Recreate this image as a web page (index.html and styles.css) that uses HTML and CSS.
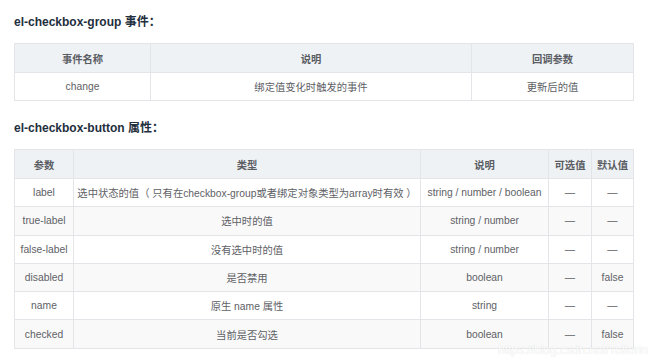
FILE: index.html
```html
<!DOCTYPE html>
<html lang="zh-CN">
<head>
<meta charset="utf-8">
<link rel="stylesheet" href="styles.css">
</head>
<body>
<div class="page">
  <h3 class="title">el-checkbox-group 事件：</h3>
  <table class="doc-table t1">
    <colgroup><col class="c136"><col class="c321"><col></colgroup>
    <thead>
      <tr><th>事件名称</th><th>说明</th><th>回调参数</th></tr>
    </thead>
    <tbody>
      <tr><td>change</td><td>绑定值变化时触发的事件</td><td>更新后的值</td></tr>
    </tbody>
  </table>

  <h3 class="title second">el-checkbox-button 属性：</h3>
  <table class="doc-table t2">
    <colgroup><col class="c59"><col class="c347"><col class="c128"><col class="c43"><col></colgroup>
    <thead>
      <tr><th>参数</th><th>类型</th><th>说明</th><th>可选值</th><th>默认值</th></tr>
    </thead>
    <tbody>
      <tr><td>label</td><td>选中状态的值（ 只有在checkbox-group或者绑定对象类型为array时有效 ）</td><td>string / number / boolean</td><td>—</td><td>—</td></tr>
      <tr><td>true-label</td><td>选中时的值</td><td>string / number</td><td>—</td><td>—</td></tr>
      <tr><td>false-label</td><td>没有选中时的值</td><td>string / number</td><td>—</td><td>—</td></tr>
      <tr><td>disabled</td><td>是否禁用</td><td>boolean</td><td>—</td><td>false</td></tr>
      <tr><td>name</td><td>原生 name 属性</td><td>string</td><td>—</td><td>—</td></tr>
      <tr><td>checked</td><td>当前是否勾选</td><td>boolean</td><td>—</td><td>false</td></tr>
    </tbody>
  </table>
  <div class="watermark">https://blog.csdn.net/Tefferin</div>
</div>
</body>
</html>
```
FILE: styles.css
```css
html, body {
  margin: 0;
  padding: 0;
  background: #ffffff;
}
body {
  font-family: "Liberation Sans", "Noto Sans CJK SC", sans-serif;
  color: #5e6166;
}
.page {
  position: relative;
  width: 620px;
  height: 364px;
  padding: 0 16px 0 14px;
  overflow: hidden;
}
.title {
  margin: 14px 0 13px;
  font-size: 12px;
  line-height: 16px;
  font-weight: bold;
  color: #1f2f3d;
}
.title.second {
  margin-top: 19px;
}
.doc-table {
  width: 620px;
  border-collapse: collapse;
  table-layout: fixed;
  font-size: 10.3px;
}
.doc-table th,
.doc-table td {
  border: 1px solid #e3e5e8;
  text-align: center;
  padding: 0 3px;
  white-space: nowrap;
  overflow: hidden;
}
.doc-table th {
  background: #eff2f5;
  font-weight: bold;
  color: #5a5d63;
  height: 28px;
}
.doc-table td {
  height: 27px;
}
.t2 td {
  height: 27.3px;
}
.t2 tbody tr:nth-child(even) td {
  background: #f9f9f9;
}
.c136 { width: 136px; }
.c321 { width: 321px; }
.c59 { width: 59px; }
.c347 { width: 347px; }
.c128 { width: 128px; }
.c43 { width: 43px; }
.watermark {
  position: absolute;
  left: 498px;
  top: 343px;
  font-size: 12px;
  color: rgba(255, 255, 255, 0.95);
  text-shadow: 0 0 1px rgba(150, 150, 150, 0.35);
  white-space: nowrap;
}
```
